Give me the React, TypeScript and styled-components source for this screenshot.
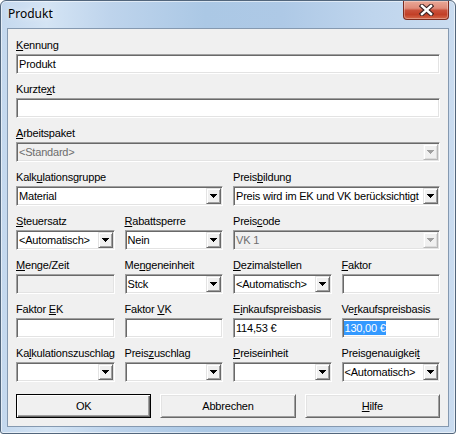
import React from "react";
import styled, { createGlobalStyle } from "styled-components";

const GlobalStyle = createGlobalStyle`
  html, body {
    margin: 0;
    padding: 0;
    background: #ffffff;
  }
  body {
    font-family: "Liberation Sans", Arial, sans-serif;
  }
`;

const Window = styled.div`
  box-sizing: border-box;
  width: 456px;
  height: 434px;
  display: flex;
  flex-direction: column;
  border: 1px solid #52667c;
  border-radius: 6px 6px 3px 3px;
  background: linear-gradient(
    90deg,
    #c4d8ee 0%,
    #d4e4f4 10%,
    #bed4ec 24%,
    #abc8e5 45%,
    #aec9e6 62%,
    #bfd5ed 82%,
    #cadcf0 100%
  );
  box-shadow: inset 0 0 0 1px rgba(255, 255, 255, 0.55);
  overflow: hidden;
`;

const TitleBar = styled.div`
  height: 27px;
  display: flex;
  align-items: flex-start;
  padding-left: 7px;
`;

const Title = styled.div`
  margin-top: 5px;
  font-family: "Noto Sans", "Open Sans", sans-serif;
  font-size: 12px;
  line-height: 16px;
  color: #000;
  text-shadow: 0 0 6px rgba(255, 255, 255, 0.9);
`;

const CloseButton = styled.div`
  box-sizing: border-box;
  margin-left: auto;
  margin-right: 6px;
  width: 46px;
  height: 19px;
  display: flex;
  align-items: center;
  justify-content: center;
  border: 1px solid #7c2c20;
  border-top: none;
  border-radius: 0 0 4px 4px;
  background: linear-gradient(
    180deg,
    #e9a897 0%,
    #df8b79 40%,
    #c9503a 52%,
    #c23f27 75%,
    #d5684a 100%
  );
  box-shadow: inset 0 0 0 1px rgba(255, 255, 255, 0.3);
`;

const Client = styled.div`
  flex: 1;
  display: flex;
  flex-direction: column;
  margin: 0 6px 6px 6px;
  padding: 9px 8px 8px 8px;
  border: 1px solid #8599b0;
  background: #f0f0f0;
`;

const FieldGrid = styled.div`
  display: grid;
  grid-template-columns: repeat(4, 1fr);
  column-gap: 10px;
  row-gap: 8px;
`;

const Field = styled.div<{ $span?: number }>`
  display: flex;
  flex-direction: column;
  gap: 2px;
  min-width: 0;
  grid-column: span ${(p) => p.$span ?? 1};
`;

const Label = styled.div`
  height: 14px;
  line-height: 14px;
  font-size: 11px;
  letter-spacing: -0.2px;
  color: #000;
  white-space: nowrap;
`;

const Sunken = styled.div<{ $disabled?: boolean }>`
  box-sizing: border-box;
  height: 20px;
  display: flex;
  align-items: stretch;
  padding: 1px;
  border: 1px solid;
  border-color: #a0a0a0 #ffffff #ffffff #a0a0a0;
  box-shadow: inset 1px 1px 0 #696969, inset -1px -1px 0 #e3e3e3;
  background: ${(p) => (p.$disabled ? "#f0f0f0" : "#ffffff")};
  overflow: hidden;
`;

const Value = styled.div<{ $disabled?: boolean }>`
  flex: 1;
  min-width: 0;
  display: flex;
  align-items: center;
  padding-left: 1px;
  font-size: 11px;
  letter-spacing: -0.2px;
  white-space: nowrap;
  color: ${(p) => (p.$disabled ? "#6d6d6d" : "#000")};
`;

const Selected = styled.span`
  background: #3399ff;
  color: #ffffff;
  padding: 1px 0 1px 1px;
  margin-left: -1px;
`;

const DropButton = styled.div<{ $disabled?: boolean }>`
  box-sizing: border-box;
  width: 15px;
  flex-shrink: 0;
  display: flex;
  align-items: center;
  justify-content: center;
  border: 1px solid;
  border-color: ${(p) =>
    p.$disabled ? "#f4f4f4 #b8b8b8 #b8b8b8 #f4f4f4" : "#e3e3e3 #696969 #696969 #e3e3e3"};
  box-shadow: ${(p) =>
    p.$disabled
      ? "inset 1px 1px 0 #ffffff, inset -1px -1px 0 #dcdcdc"
      : "inset 1px 1px 0 #ffffff, inset -1px -1px 0 #a0a0a0"};
  background: #f0f0f0;
`;

const PushButton = styled.div<{ $default?: boolean }>`
  box-sizing: border-box;
  height: 24px;
  display: flex;
  align-items: center;
  justify-content: center;
  font-size: 11px;
  letter-spacing: -0.2px;
  color: #000;
  background: #f0f0f0;
  border: 1px solid;
  border-color: ${(p) => (p.$default ? "#000000" : "#ffffff #696969 #696969 #ffffff")};
  box-shadow: ${(p) =>
    p.$default
      ? "inset 1px 1px 0 #ffffff, inset -1px -1px 0 #696969, inset -2px -2px 0 #a0a0a0"
      : "inset 1px 1px 0 #e3e3e3, inset -1px -1px 0 #a0a0a0"};
`;

const ButtonRow = styled.div`
  display: grid;
  grid-template-columns: repeat(3, 1fr);
  column-gap: 9px;
  margin-top: 12px;
`;

const Arrow = ({ disabled }: { disabled?: boolean }) => (
  <svg width="7" height="4" viewBox="0 0 7 4" shapeRendering="crispEdges">
    <polygon points="0,0 7,0 4,4 3,4" fill={disabled ? "#a0a0a0" : "#000"} />
  </svg>
);

const CloseGlyph = () => (
  <svg width="15" height="12" viewBox="0 0 15 12">
    <path d="M3 2 L12 10 M12 2 L3 10" stroke="#3b2222" strokeWidth="4.6" strokeLinecap="square" />
    <path d="M3 2 L12 10 M12 2 L3 10" stroke="#ffffff" strokeWidth="2.4" strokeLinecap="square" />
  </svg>
);

interface IFieldProps {
  label: React.ReactNode;
  span?: number;
  value?: React.ReactNode;
  disabled?: boolean;
  combo?: boolean;
}

const FormField = ({ label, span, value, disabled, combo }: IFieldProps) => (
  <Field $span={span}>
    <Label>{label}</Label>
    <Sunken $disabled={disabled}>
      <Value $disabled={disabled}>{value}</Value>
      {combo && (
        <DropButton $disabled={disabled}>
          <Arrow disabled={disabled} />
        </DropButton>
      )}
    </Sunken>
  </Field>
);

const App = () => {
  return (
    <>
      <GlobalStyle />
      <Window>
        <TitleBar>
          <Title>Produkt</Title>
          <CloseButton>
            <CloseGlyph />
          </CloseButton>
        </TitleBar>
        <Client>
          <FieldGrid>
            <FormField span={4} label={<><u>K</u>ennung</>} value="Produkt" />
            <FormField span={4} label={<>Kurzte<u>x</u>t</>} />
            <FormField span={4} label={<><u>A</u>rbeitspaket</>} value="<Standard>" disabled combo />

            <FormField span={2} label={<>Kalk<u>u</u>lationsgruppe</>} value="Material" combo />
            <FormField span={2} label={<>Preis<u>b</u>ildung</>} value="Preis wird im EK und VK berücksichtigt" combo />

            <FormField label={<><u>S</u>teuersatz</>} value="<Automatisch>" combo />
            <FormField label={<><u>R</u>abattsperre</>} value="Nein" combo />
            <FormField span={2} label={<>Preis<u>c</u>ode</>} value="VK 1" disabled combo />

            <FormField label={<><u>M</u>enge/Zeit</>} disabled />
            <FormField label={<>Me<u>n</u>geneinheit</>} value="Stck" combo />
            <FormField label={<><u>D</u>ezimalstellen</>} value="<Automatisch>" combo />
            <FormField label={<><u>F</u>aktor</>} />

            <FormField label={<>Faktor <u>E</u>K</>} />
            <FormField label={<>Faktor <u>V</u>K</>} />
            <FormField label={<>E<u>i</u>nkaufspreisbasis</>} value="114,53 €" />
            <FormField label={<>Ve<u>r</u>kaufspreisbasis</>} value={<Selected>130,00 €</Selected>} />

            <FormField label={<>Ka<u>l</u>kulationszuschlag</>} combo />
            <FormField label={<>Preis<u>z</u>uschlag</>} combo />
            <FormField label={<><u>P</u>reiseinheit</>} combo />
            <FormField label={<>Preisgenauigkei<u>t</u></>} value="<Automatisch>" combo />
          </FieldGrid>
          <ButtonRow>
            <PushButton $default>OK</PushButton>
            <PushButton>Abbrechen</PushButton>
            <PushButton>
              <span>
                <u>H</u>ilfe
              </span>
            </PushButton>
          </ButtonRow>
        </Client>
      </Window>
    </>
  );
};

export default App;
